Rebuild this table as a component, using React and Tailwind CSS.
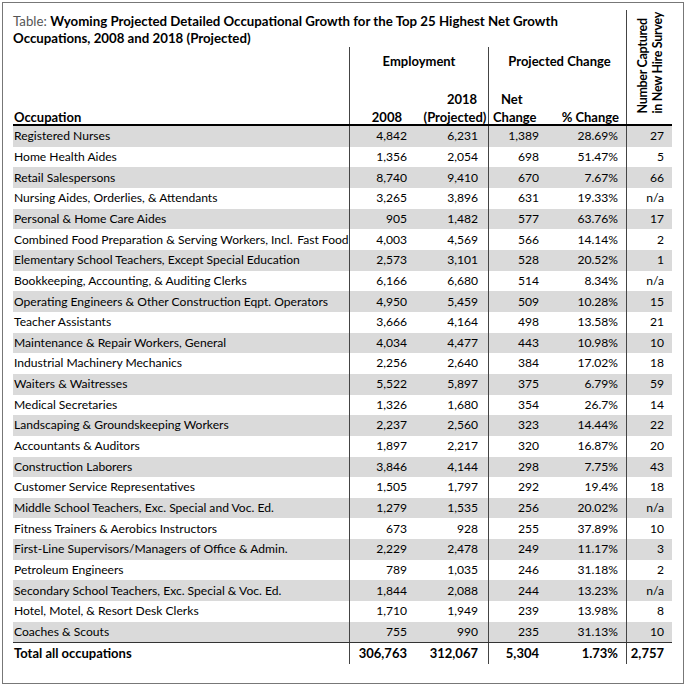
import React from 'react'

const rows = [
  ['Registered Nurses', '4,842', '6,231', '1,389', '28.69%', '27'],
  ['Home Health Aides', '1,356', '2,054', '698', '51.47%', '5'],
  ['Retail Salespersons', '8,740', '9,410', '670', '7.67%', '66'],
  ['Nursing Aides, Orderlies, & Attendants', '3,265', '3,896', '631', '19.33%', 'n/a'],
  ['Personal & Home Care Aides', '905', '1,482', '577', '63.76%', '17'],
  ['Combined Food Preparation & Serving Workers, Incl.\u2009 Fast Food', '4,003', '4,569', '566', '14.14%', '2'],
  ['Elementary School Teachers, Except Special Education', '2,573', '3,101', '528', '20.52%', '1'],
  ['Bookkeeping, Accounting, & Auditing Clerks', '6,166', '6,680', '514', '8.34%', 'n/a'],
  ['Operating Engineers & Other Construction Eqpt. Operators', '4,950', '5,459', '509', '10.28%', '15'],
  ['Teacher Assistants', '3,666', '4,164', '498', '13.58%', '21'],
  ['Maintenance & Repair Workers, General', '4,034', '4,477', '443', '10.98%', '10'],
  ['Industrial Machinery Mechanics', '2,256', '2,640', '384', '17.02%', '18'],
  ['Waiters & Waitresses', '5,522', '5,897', '375', '6.79%', '59'],
  ['Medical Secretaries', '1,326', '1,680', '354', '26.7%', '14'],
  ['Landscaping & Groundskeeping Workers', '2,237', '2,560', '323', '14.44%', '22'],
  ['Accountants & Auditors', '1,897', '2,217', '320', '16.87%', '20'],
  ['Construction Laborers', '3,846', '4,144', '298', '7.75%', '43'],
  ['Customer Service Representatives', '1,505', '1,797', '292', '19.4%', '18'],
  ['Middle School Teachers, Exc. Special and Voc. Ed.', '1,279', '1,535', '256', '20.02%', 'n/a'],
  ['Fitness Trainers & Aerobics Instructors', '673', '928', '255', '37.89%', '10'],
  ['First-Line Supervisors/Managers of Office & Admin.', '2,229', '2,478', '249', '11.17%', '3'],
  ['Petroleum Engineers', '789', '1,035', '246', '31.18%', '2'],
  ['Secondary School Teachers, Exc. Special & Voc. Ed.', '1,844', '2,088', '244', '13.23%', 'n/a'],
  ['Hotel, Motel, & Resort Desk Clerks', '1,710', '1,949', '239', '13.98%', '8'],
  ['Coaches & Scouts', '755', '990', '235', '31.13%', '10'],
]

const cols = 'grid grid-cols-[336px_67px_72px_60px_78px_46px]'

function Row({ r, shaded }) {
  return (
    <div className={`${cols} h-[20.67px] items-center ${shaded ? 'bg-[#dadada]' : 'bg-white'}`}>
      <div className="pl-[1px] whitespace-nowrap">{r[0]}</div>
      <div className="h-full flex items-center justify-end pr-[9px] border-l border-[#444]">{r[1]}</div>
      <div className="text-right pr-[10px]">{r[2]}</div>
      <div className="h-full flex items-center justify-end pr-[9px] border-l border-[#444]">{r[3]}</div>
      <div className="text-right pr-[8px]">{r[4]}</div>
      <div className="h-full flex items-center justify-end pr-[8px] border-l border-[#444]">{r[5]}</div>
    </div>
  )
}

export default function App() {
  return (
    <div className="w-[687px] h-[687px] bg-white p-[2px] text-[12.1px] text-black font-['Lato',sans-serif]">
      <div className="w-[682px] h-[682px] border border-[#777] pt-[7px] pl-[10px]">
        <div className="w-[659px]">
          {/* header */}
          <div className="flex h-[114px] text-[13px]">
            <div className="w-[613px] flex flex-col">
              <div className="pt-[3px] leading-[17px] font-bold h-[37px] text-[13.25px]">
                <span className="font-normal text-[#555]">Table: </span>
                Wyoming Projected Detailed Occupational Growth for the Top 25 Highest Net Growth
                <br />
                Occupations, 2008 and 2018 (Projected)
              </div>
              <div className="grid grid-cols-[336px_139px_138px] flex-1 font-bold leading-[18px]">
                <div className="flex items-end pl-[1px] mb-[-2px]">Occupation</div>
                <div className="border-l border-[#444] flex flex-col">
                  <div className="h-[28px] flex items-center justify-center">Employment</div>
                  <div className="flex-1 grid grid-cols-[67px_72px] items-end mb-[-2px]">
                    <div className="text-right pr-[15px]">2008</div>
                    <div className="text-center pl-[4px]">
                      <div className="pl-[14px]">2018</div>
                      <div>(Projected)</div>
                    </div>
                  </div>
                </div>
                <div className="border-l border-[#444] flex flex-col">
                  <div className="h-[28px] flex items-center justify-center pl-[4px]">Projected Change</div>
                  <div className="flex-1 grid grid-cols-[60px_78px] items-end mb-[-2px]">
                    <div className="pl-[4px]">
                      <div className="pl-[8px]">Net</div>
                      <div>Change</div>
                    </div>
                    <div className="text-right pr-[8px]">% Change</div>
                  </div>
                </div>
              </div>
            </div>
            <div className="w-[46px] border-l border-[#444] flex items-end justify-center pb-[10px]">
              <div className="[writing-mode:vertical-rl] rotate-180 font-bold text-[12.5px] leading-[15px] tracking-[-0.3px]">
                Number Captured
                <br />
                in New Hire Survey
              </div>
            </div>
          </div>
          <div className="h-[2px] bg-black" />
          {rows.map((r, i) => (
            <Row key={r[0]} r={r} shaded={i % 2 === 0} />
          ))}
          <div className={`${cols} h-[22px] items-center font-bold text-[13px] border-t border-[#333]`}>
            <div className="pl-[1px]">Total all occupations</div>
            <div className="h-full flex items-center justify-end pr-[9px] border-l border-[#444]">306,763</div>
            <div className="text-right pr-[10px]">312,067</div>
            <div className="h-full flex items-center justify-end pr-[9px] border-l border-[#444]">5,304</div>
            <div className="text-right pr-[8px]">1.73%</div>
            <div className="h-full flex items-center justify-end pr-[8px] border-l border-[#444]">2,757</div>
          </div>
        </div>
      </div>
    </div>
  )
}
